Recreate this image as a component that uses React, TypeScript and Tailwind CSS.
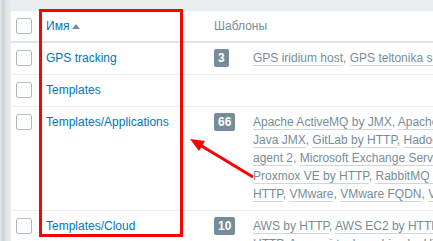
import React from "react";

type Row = {
  name: string;
  count?: number;
  lines: string[][];
};

const rows: Row[] = [
  {
    name: "GPS tracking",
    count: 3,
    lines: [["GPS iridium host", "GPS teltonika server", "GPS tracker"]],
  },
  { name: "Templates", lines: [[]] },
  {
    name: "Templates/Applications",
    count: 66,
    lines: [
      ["Apache ActiveMQ by JMX", "Apache Cassandra by JMX", "Apache Kafka by JMX"],
      ["Java JMX", "GitLab by HTTP", "Hadoop by HTTP", "HashiCorp Consul"],
      ["agent 2", "Microsoft Exchange Server 2016 by Zabbix agent"],
      ["Proxmox VE by HTTP", "RabbitMQ cluster by HTTP", "RabbitMQ"],
      ["HTTP", "VMware", "VMware FQDN", "Vault by HTTP"],
    ],
  },
  {
    name: "Templates/Cloud",
    count: 10,
    lines: [
      ["AWS by HTTP", "AWS EC2 by HTTP", "AWS RDS instance by HTTP"],
      ["HTTP", "Azure virtual machine by HTTP", "Azure by HTTP"],
    ],
  },
];

function Checkbox() {
  return <span className="block w-4 h-4 border border-[#acbbc2] rounded-[2px] bg-white" />;
}

function TemplateLine({ items }: { items: string[] }) {
  return (
    <div className="whitespace-nowrap h-[18px]">
      {items.map((t, i) => (
        <React.Fragment key={i}>
          <span className="border-b border-[#cfd7db] text-[#768d99]">{t}</span>
          {i < items.length - 1 && <span className="text-[#768d99]">, </span>}
        </React.Fragment>
      ))}
    </div>
  );
}

export default function App() {
  return (
    <div className="relative w-[433px] h-[241px] overflow-hidden flex bg-[#ebeef0] text-[12px] leading-[18px] font-['Liberation_Sans',Arial,sans-serif]">
      <div className="w-[11px] shrink-0 bg-[linear-gradient(to_right,#e4e8ea_0px,#c9d0d4_3px,#dde2e5_6px,#ebeef0_11px)]" />
      <div className="flex-1 pt-[11px] min-w-0">
        <div className="bg-white h-full">
          <div className="grid grid-cols-[30px_168px_39px_1fr] h-[32px] border-b-2 border-[#dfe4e7]">
            <div className="pl-[5px] flex items-center">
              <Checkbox />
            </div>
            <div className="pl-[5px] flex items-center text-[#0275b8]">
              Имя
              <span className="ml-[3px] w-0 h-0 border-x-[4px] border-x-transparent border-b-[5px] border-b-[#768d99]" />
            </div>
            <div className="col-span-2 pl-[5px] flex items-center text-[#768d99]">Шаблоны</div>
          </div>
          {rows.map((r, i) => (
            <div key={i} className="grid grid-cols-[30px_168px_39px_1fr] border-b border-[#ebeef0]">
              <div className="pl-[5px] pt-[7px]">
                <Checkbox />
              </div>
              <div className="px-[5px] pt-[6px] pb-[7px] text-[#0275b8]">{r.name}</div>
              <div className="px-[5px] pt-[6px] pb-[7px]">
                {r.count !== undefined && (
                  <span className="inline-block bg-[#768d99] text-white font-bold px-[4px] rounded-[2px] leading-[18px]">
                    {r.count}
                  </span>
                )}
              </div>
              <div className="pl-[5px] pt-[6px] pb-[7px] overflow-hidden">
                {r.lines.map((l, j) => (
                  <TemplateLine key={j} items={l} />
                ))}
              </div>
            </div>
          ))}
        </div>
      </div>
      <div className="absolute left-[39px] top-[9px] w-[144px] h-[228px] border-[3px] border-[#ff0000]" />
      <svg className="absolute left-0 top-0" width="433" height="241">
        <line x1="253" y1="177" x2="200" y2="145" stroke="#ff0000" strokeWidth="3" />
        <polygon points="190,139 205,141 199,151" fill="#ff0000" />
      </svg>
    </div>
  );
}
